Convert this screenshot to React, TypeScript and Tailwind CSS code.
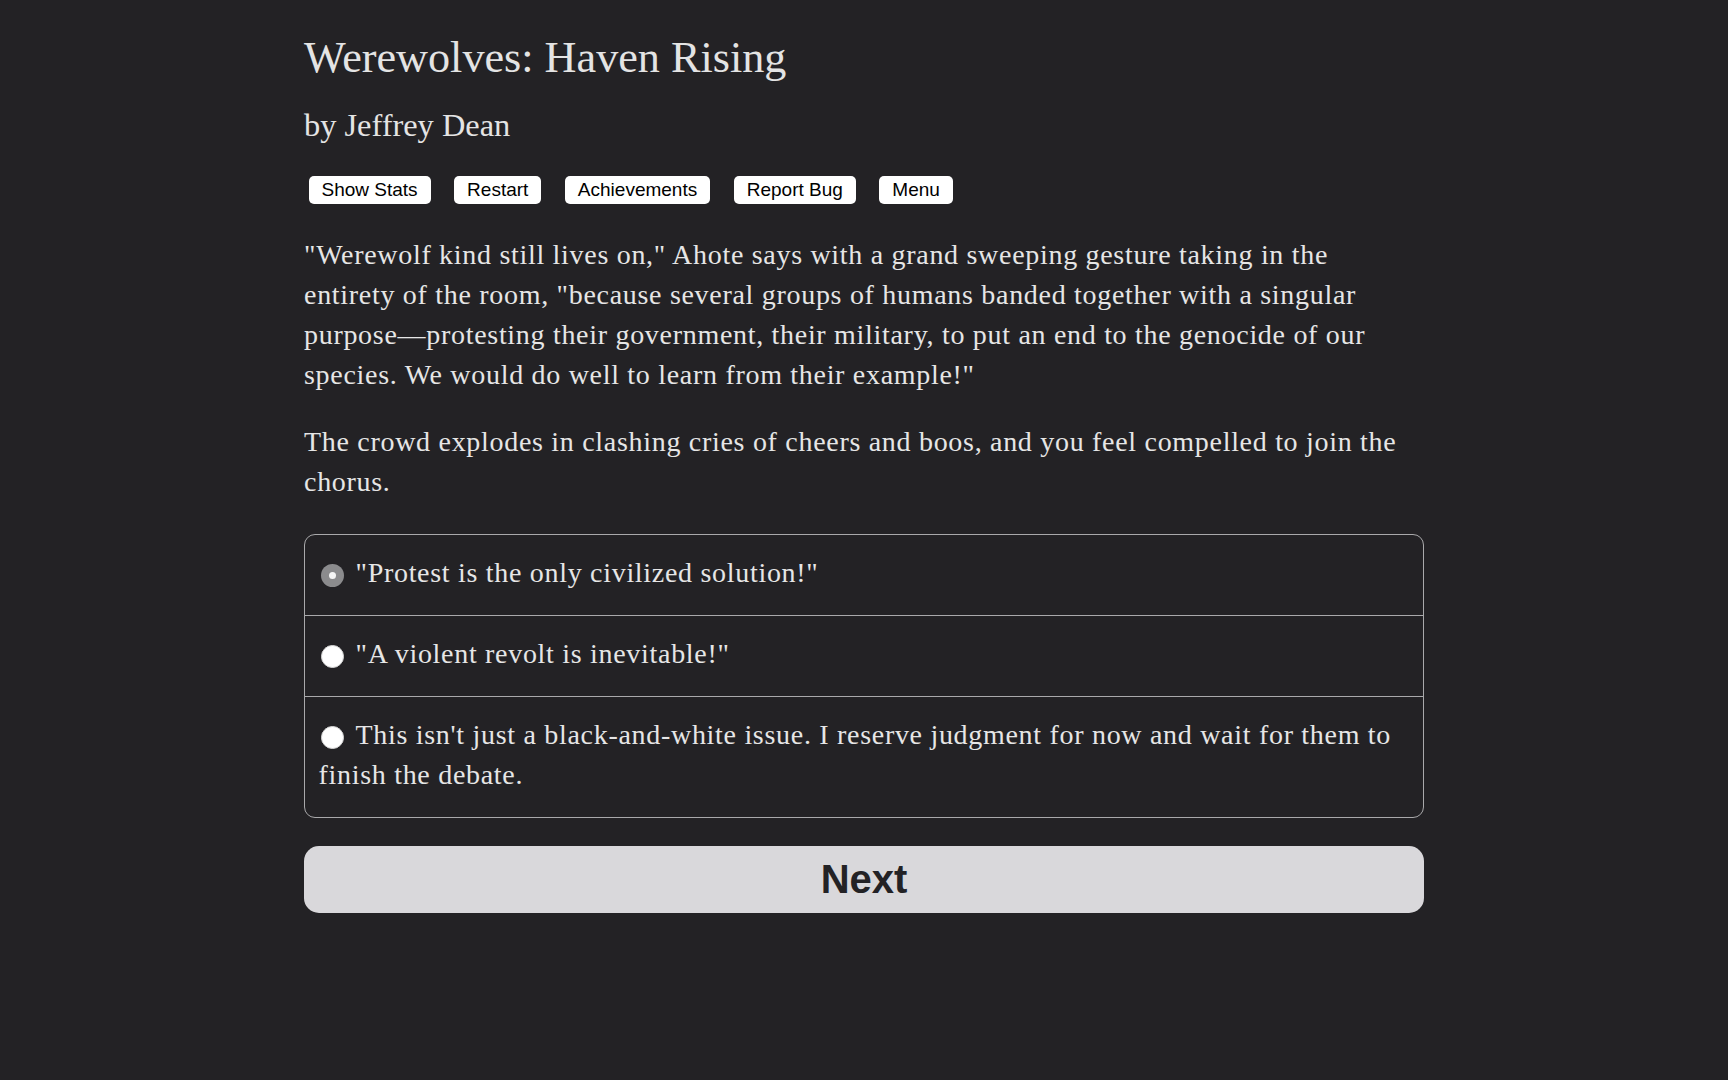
import React from 'react';

const serif = 'font-["Liberation_Serif","Times_New_Roman",serif]';
const sans = 'font-["Liberation_Sans",Arial,sans-serif]';

const menuButtons = ['Show Stats', 'Restart', 'Achievements', 'Report Bug', 'Menu'];

const options = [
  { text: '"Protest is the only civilized solution!"', checked: true },
  { text: '"A violent revolt is inevitable!"', checked: false },
  {
    text: "This isn't just a black-and-white issue. I reserve judgment for now and wait for them to finish the debate.",
    checked: false,
  },
];

function Radio({ checked }: { checked: boolean }) {
  if (checked) {
    // greyed selected radio with a small light dot
    return (
      <span className="ml-[2px] mr-[12px] inline-block h-[23px] w-[23px] rounded-full bg-[#8b8b8d] p-[8px] align-[-4.6px]">
        <span className="block h-[7px] w-[7px] rounded-full bg-[#f4f4f4]" />
      </span>
    );
  }
  return (
    <span className="ml-[2px] mr-[12px] inline-block h-[23px] w-[23px] rounded-full border border-[#d6d6d6] bg-white align-[-4.6px]" />
  );
}

export default function App() {
  return (
    <div className={`min-h-screen bg-[#232225] text-[#e6e6e6] ${serif}`}>
      <div className="mx-auto w-[1120px] pt-[31.5px] pb-10">
        <h1 className="text-[44.2px] leading-[52px] text-[#e4e4e4]">Werewolves: Haven Rising</h1>
        <h2 className="mt-[21.5px] text-[32.4px] leading-[40px] text-[#e4e4e4]">by Jeffrey Dean</h2>

        <div className="mt-[31px] ml-[4.5px] flex gap-[23.5px]">
          {menuButtons.map((label) => (
            <button
              key={label}
              className={`flex h-[27.5px] items-center rounded-[5px] bg-white px-[13px] text-[19px] leading-none text-black ${sans}`}
            >
              {label}
            </button>
          ))}
        </div>

        <div className="text-[28px] leading-[40px] tracking-[0.7px]">
          <p className="mt-[31.4px]">
            "Werewolf kind still lives on," Ahote says with a grand sweeping gesture taking in the entirety of
            the room, "because several groups of humans banded together with a singular purpose—protesting
            their government, their military, to put an end to the genocide of our species. We would do well
            to learn from their example!"
          </p>
          <p className="mt-[27.4px]">
            The crowd explodes in clashing cries of cheers and boos, and you feel compelled to join the
            chorus.
          </p>

          <div className="mt-[31.8px] overflow-hidden rounded-[11px] border border-[#a9a9ab]">
            {options.map((opt, i) => (
              <label
                key={i}
                className={`block cursor-pointer pt-[18px] pb-[22px] pl-[13.5px] pr-[14px] ${
                  i > 0 ? 'border-t border-[#a9a9ab]' : ''
                }`}
              >
                <Radio checked={opt.checked} />
                {opt.text}
              </label>
            ))}
          </div>
        </div>

        <button
          className={`mt-[28px] flex h-[66.5px] w-full items-center justify-center rounded-[15px] bg-[#d9d8db] text-[40px] font-bold text-[#232225] ${sans}`}
        >
          Next
        </button>
      </div>
    </div>
  );
}
